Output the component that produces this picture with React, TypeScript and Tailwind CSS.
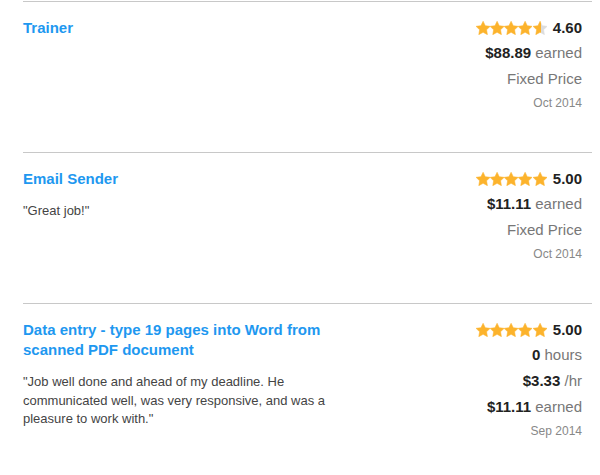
import { useId } from 'react';

type Row = { strong?: string; text: string; small?: boolean };

const jobs: { title: string; quote?: string; rating: number; rows: Row[] }[] = [
  {
    title: 'Trainer',
    rating: 4.6,
    rows: [{ strong: '$88.89', text: 'earned' }, { text: 'Fixed Price' }, { text: 'Oct 2014', small: true }]
  },
  {
    title: 'Email Sender',
    quote: '"Great job!"',
    rating: 5,
    rows: [{ strong: '$11.11', text: 'earned' }, { text: 'Fixed Price' }, { text: 'Oct 2014', small: true }]
  },
  {
    title: 'Data entry - type 19 pages into Word from scanned PDF document',
    quote: '"Job well done and ahead of my deadline. He communicated well, was very responsive, and was a pleasure to work with."',
    rating: 5,
    rows: [
      { strong: '0', text: 'hours' },
      { strong: '$3.33', text: '/hr' },
      { strong: '$11.11', text: 'earned' },
      { text: 'Sep 2014', small: true }
    ]
  }
];

function Star({ fill }: { fill: number }) {
  const id = useId();
  return (
    <svg viewBox="1.2 1.2 21.6 21" className="w-[14.2px] h-[14px]">
      <defs>
        <linearGradient id={id} x1="0" x2="1" y1="0" y2="0">
          <stop offset={fill} stopColor="#fcb32c" />
          <stop offset={fill} stopColor="#dcdcdc" />
        </linearGradient>
      </defs>
      <path
        d="M12 1.4l3.3 6.7 7.4 1.1-5.4 5.2 1.3 7.4L12 18.3l-6.6 3.5 1.3-7.4-5.4-5.2 7.4-1.1z"
        fill={`url(#${id})`}
        stroke={`url(#${id})`}
        strokeWidth="0.8"
        strokeLinejoin="round"
      />
    </svg>
  );
}

function Stars({ rating }: { rating: number }) {
  return (
    <div className="flex items-center">
      {[0, 1, 2, 3, 4].map((i) => (
        <Star key={i} fill={Math.max(0, Math.min(1, rating - i))} />
      ))}
    </div>
  );
}

export default function App() {
  return (
    <div className="bg-white min-h-screen pt-px" style={{ fontFamily: '"Liberation Sans", Arial, sans-serif' }}>
      <div className="ml-[23px] w-[569px]">
        {jobs.map((job, index) => (
          <div key={index} className="border-t border-[#c8c8c8] pt-[16px] pb-[39px] pr-[10px] flex justify-between">
            <div className="w-[330px]">
              <h3 className="text-[15px] leading-[20px] font-bold text-[#1e98f0]">{job.title}</h3>
              {job.quote && (
                <p className="mt-[13px] text-[13px] leading-[18.5px] text-[#444]">{job.quote}</p>
              )}
            </div>
            <div className="flex flex-col items-end text-[15px] leading-[20px]">
              <div className="flex items-center gap-[6px] h-[20px]">
                <Stars rating={job.rating} />
                <span className="font-bold text-[#222]">{job.rating.toFixed(2)}</span>
              </div>
              {job.rows.map((row, i) =>
                row.small ? (
                  <div key={i} className="mt-[4px] h-[20px] text-[12px] text-[#888]">
                    {row.text}
                  </div>
                ) : (
                  <div key={i} className={`${i === 0 ? 'mt-[5px]' : 'mt-[6px]'} h-[20px] text-[#777]`}>
                    {row.strong && <span className="font-bold text-[#222]">{row.strong} </span>}
                    {row.text}
                  </div>
                )
              )}
            </div>
          </div>
        ))}
      </div>
    </div>
  );
}
